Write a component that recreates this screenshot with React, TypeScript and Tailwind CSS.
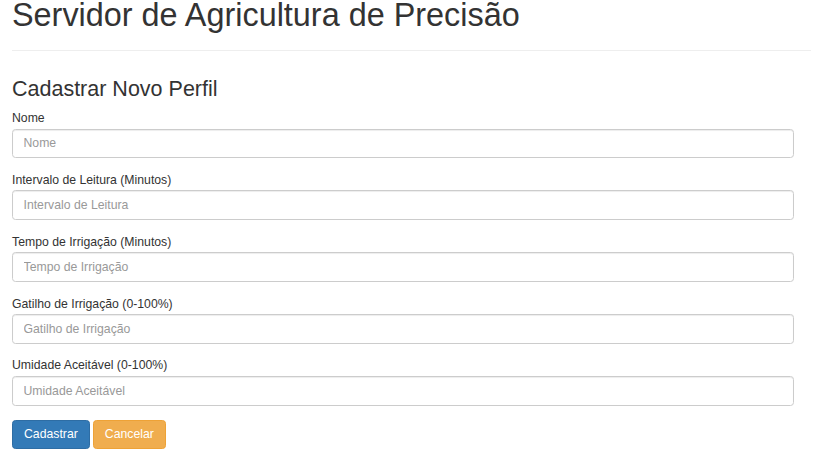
import React from "react";

const fields = [
  { label: "Nome", ph: "Nome" },
  { label: "Intervalo de Leitura (Minutos)", ph: "Intervalo de Leitura" },
  { label: "Tempo de Irrigação (Minutos)", ph: "Tempo de Irrigação" },
  { label: "Gatilho de Irrigação (0-100%)", ph: "Gatilho de Irrigação" },
  { label: "Umidade Aceitável (0-100%)", ph: "Umidade Aceitável" },
];

export default function App() {
  return (
    <div
      className="w-[821px] h-[455px] overflow-hidden bg-white text-[#333] px-[12px]"
      style={{ fontFamily: '"Liberation Sans", Arial, Helvetica, sans-serif' }}
    >
      <div className="border-b border-[#eee] pb-[19px] w-[799px]">
        <h1 className="text-[32.4px] leading-[31px] font-normal m-0 whitespace-nowrap">
          Servidor de Agricultura de Precisão
        </h1>
      </div>
      <h3 className="text-[21.5px] leading-[23px] font-normal mt-[27px] mb-[9px]">
        Cadastrar Novo Perfil
      </h3>
      <form className="w-[782px]" onSubmit={(e) => e.preventDefault()}>
        {fields.map((f) => (
          <div key={f.label} className="mb-[13.6px]">
            <label className="block text-[12.25px] leading-[17.5px] mb-[1px]">
              {f.label}
            </label>
            <input
              type="text"
              placeholder={f.ph}
              className="block w-full h-[29.75px] px-[10.5px] text-[12.25px] text-[#555] border border-[#ccc] rounded-[3.5px] shadow-[inset_0_1px_1px_rgba(0,0,0,0.075)] placeholder:text-[#999] outline-none bg-white"
            />
          </div>
        ))}
        <div className="flex gap-[3px] pt-[0.5px]">
          <button
            type="submit"
            className="h-[29.75px] px-[11px] text-[12.25px] text-white bg-[#337ab7] border border-[#2e6da4] rounded-[3.5px]"
          >
            Cadastrar
          </button>
          <button
            type="button"
            className="h-[29.75px] px-[11px] text-[12.25px] text-white bg-[#f0ad4e] border border-[#eea236] rounded-[3.5px]"
          >
            Cancelar
          </button>
        </div>
      </form>
    </div>
  );
}
